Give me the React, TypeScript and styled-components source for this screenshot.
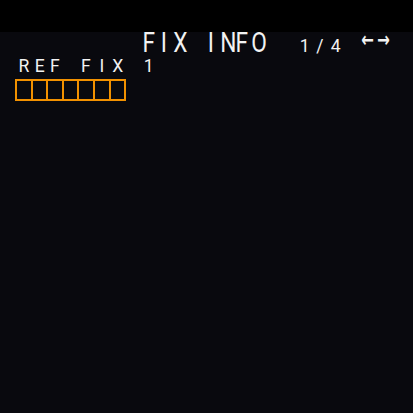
import styled, { createGlobalStyle } from "styled-components";

const CELL = 15.6;

const GlobalStyle = createGlobalStyle`
  html, body {
    margin: 0;
    padding: 0;
    background: #000;
  }
`;

const Screen = styled.div`
  width: 413px;
  height: 413px;
  display: flex;
  flex-direction: column;
  background: #09090e;
  color: #f2f2f2;
  font-family: Roboto, "DejaVu Sans", sans-serif;
  overflow: hidden;
`;

const TopBand = styled.div`
  height: 32px;
  flex-shrink: 0;
  background: #000;
`;

const Display = styled.div`
  display: flex;
  flex-direction: column;
  padding: 1px 0 0 16px;
`;

const Line = styled.div<{ $gap?: number }>`
  display: flex;
  align-items: baseline;
  height: 20px;
  margin-top: ${(p) => p.$gap ?? 0}px;
`;

const Cell = styled.span<{ $size: "large" | "small" }>`
  display: inline-block;
  width: ${CELL}px;
  text-align: center;
  line-height: 20px;
  font-size: ${(p) => (p.$size === "large" ? 27 : 18.5)}px;
  font-weight: 400;
  white-space: pre;
  transform: scaleX(${(p) => (p.$size === "large" ? 0.84 : 0.95)});
`;

const ArrowCell = styled.span`
  display: inline-block;
  width: ${CELL}px;
  text-align: center;
  line-height: 20px;
  font-family: "DejaVu Sans", sans-serif;
  font-size: 21px;
  font-weight: 700;
  transform: translate(0, -5px) scaleX(0.72);
`;

const BoxRow = styled.div`
  display: flex;
  margin: 3px 0 0 -1px;
`;

const Box = styled.div<{ $last?: boolean }>`
  box-sizing: border-box;
  width: ${(p) => (p.$last ? CELL + 2 : CELL)}px;
  height: 22px;
  border: 2px solid #f29100;
  border-right-width: ${(p) => (p.$last ? 2 : 0)}px;
`;

function Text({ value, size }: { value: string; size: "large" | "small" }) {
  return (
    <>
      {value.split("").map((ch, i) => (
        <Cell key={i} $size={size}>
          {ch}
        </Cell>
      ))}
    </>
  );
}

export default function App() {
  const boxes = Array.from({ length: 7 }, (_, i) => i);

  return (
    <>
      <GlobalStyle />
      <Screen>
        <TopBand />
        <Display>
          <Line>
            <Text value="        FIX INFO" size="large" />
            <Text value="  1/4 " size="small" />
            <ArrowCell>←</ArrowCell>
            <ArrowCell>→</ArrowCell>
          </Line>
          <Line $gap={3}>
            <Text value="REF FIX 1" size="small" />
          </Line>
          <BoxRow>
            {boxes.map((i) => (
              <Box key={i} $last={i === boxes.length - 1} />
            ))}
          </BoxRow>
        </Display>
      </Screen>
    </>
  );
}
